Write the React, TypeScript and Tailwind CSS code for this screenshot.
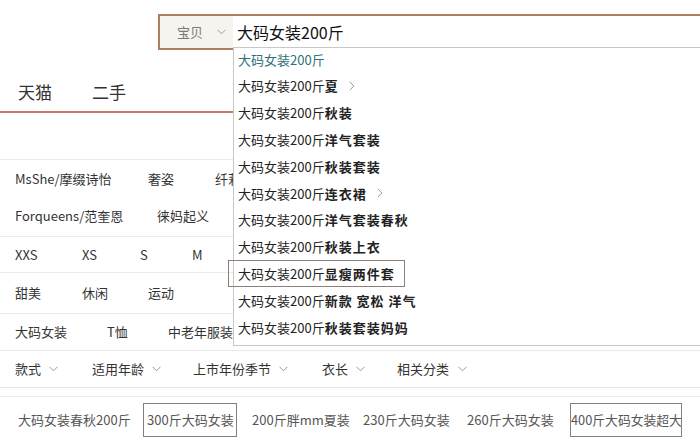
import React from "react";

const Chevron = ({ className = "" }: { className?: string }) => (
  <svg width="9" height="6" viewBox="0 0 9 6" className={className}>
    <polyline points="0.5,0.8 4.5,4.8 8.5,0.8" fill="none" stroke="#9a9a9a" strokeWidth="1" />
  </svg>
);

const RightChevron = () => (
  <svg width="6" height="10" viewBox="0 0 6 10" className="ml-[10px]">
    <polyline points="0.8,0.8 4.8,5 0.8,9.2" fill="none" stroke="#9a9a9a" strokeWidth="1" />
  </svg>
);

const suggestions: { suffix: string; arrow?: boolean; boxed?: boolean }[] = [
  { suffix: "" },
  { suffix: "夏", arrow: true },
  { suffix: "秋装" },
  { suffix: "洋气套装" },
  { suffix: "秋装套装" },
  { suffix: "连衣裙", arrow: true },
  { suffix: "洋气套装春秋" },
  { suffix: "秋装上衣" },
  { suffix: "显瘦两件套", boxed: true },
  { suffix: "新款 宽松 洋气" },
  { suffix: "秋装套装妈妈" },
];

export default function App() {
  return (
    <div className="relative w-[700px] h-[443px] overflow-hidden bg-white font-['Noto_Sans_CJK_SC','Noto_Sans',sans-serif] text-[#333]">
      {/* search bar */}
      <div className="pt-[14px] pl-[158px]">
        <div className="flex h-[36px] w-[600px] border-2 border-[#b27c60]">
          <div className="flex w-[73px] items-center bg-[#f7f3ee] pl-[17px] text-[13px] text-[#7a7a7a]">
            <span>宝贝</span>
            <Chevron className="ml-[14px]" />
          </div>
          <div className="flex flex-1 items-center bg-white pl-[4px] text-[16px] text-[#111]">
            大码女装200斤
          </div>
        </div>
      </div>

      {/* tabs */}
      <div className="flex h-[61px] items-center pt-[22px] text-[17px] text-[#333]">
        <span className="ml-[18px]">天猫</span>
        <span className="ml-[40px]">二手</span>
      </div>
      <div className="h-[2px] bg-[#c57a62]" />
      <div className="h-[47px] border-b border-[#ebebeb]" />

      {/* brand rows */}
      <div className="h-[77px] border-b border-[#ebebeb] text-[13px]">
        <div className="flex h-[37px] items-center pl-[15px]">
          <span className="w-[133px]">MsShe/摩缀诗怡</span>
          <span className="w-[67px]">奢姿</span>
          <span className="whitespace-nowrap">纤莉</span>
        </div>
        <div className="flex h-[37px] items-center pl-[15px]">
          <span className="w-[142px]">Forqueens/范奎恩</span>
          <span>徕妈起义</span>
        </div>
      </div>

      {/* sizes */}
      <div className="flex h-[36px] items-center border-b border-[#ebebeb] pl-[15px] text-[13px]">
        <span className="w-[67px]">XXS</span>
        <span className="w-[58px]">XS</span>
        <span className="w-[52px]">S</span>
        <span>M</span>
      </div>

      {/* style */}
      <div className="flex h-[41px] items-center border-b border-[#ebebeb] pl-[15px] text-[13px]">
        <span className="w-[67px]">甜美</span>
        <span className="w-[66px]">休闲</span>
        <span>运动</span>
      </div>

      {/* category */}
      <div className="flex h-[37px] items-center border-b border-[#ebebeb] pl-[15px] text-[13px]">
        <span className="w-[92px]">大码女装</span>
        <span className="w-[61px]">T恤</span>
        <span className="whitespace-nowrap">中老年服装</span>
      </div>

      {/* dropdown filters */}
      <div className="flex h-[37px] items-center border-b border-[#e6e6e6] pl-[15px] text-[13px]">
        <span className="flex w-[77px] items-center gap-[8px]">
          款式 <Chevron />
        </span>
        <span className="flex w-[101px] items-center gap-[8px]">
          适用年龄 <Chevron />
        </span>
        <span className="flex w-[129px] items-center gap-[8px]">
          上市年份季节 <Chevron />
        </span>
        <span className="flex w-[75px] items-center gap-[8px]">
          衣长 <Chevron />
        </span>
        <span className="flex items-center gap-[9px]">
          相关分类 <Chevron />
        </span>
      </div>
      <div className="h-[9px] border-b border-[#ededed]" />

      {/* related tags */}
      <div className="flex h-[45px] items-center whitespace-nowrap text-[13px] text-[#555]">
        <span className="w-[143px] pl-[18px]">大码女装春秋200斤</span>
        <span className="flex h-[34px] w-[94px] items-center border border-[#8a7d76] pl-[3px]">300斤大码女装</span>
        <span className="ml-[15px] w-[111px]">200斤胖mm夏装</span>
        <span className="w-[104px]">230斤大码女装</span>
        <span className="w-[103px]">260斤大码女装</span>
        <span className="flex h-[34px] w-[112px] items-center overflow-hidden border border-[#8a7d76] text-[12.8px]">400斤大码女装超大</span>
      </div>

      {/* suggestion dropdown */}
      <div className="absolute left-[233px] top-[47px] h-[299px] w-[480px] border border-[#c8c8c8] bg-white">
        <div className="-mt-[2px]">
          {suggestions.map((s, i) => (
            <div key={i} className="relative flex h-[26.8px] items-center whitespace-nowrap pl-[4px] text-[13px]">
              {s.boxed && (
                <div className="absolute left-[-6px] top-0 h-[27px] w-[177px] border border-[#8d7f78]" />
              )}
              <span className={i === 0 ? "text-[#2e6f78]" : "text-[#222]"}>大码女装200斤</span>
              {s.suffix && (
                <span className="font-bold tracking-[1px] text-[#222]">{s.suffix}</span>
              )}
              {s.arrow && <RightChevron />}
            </div>
          ))}
        </div>
      </div>
    </div>
  );
}
